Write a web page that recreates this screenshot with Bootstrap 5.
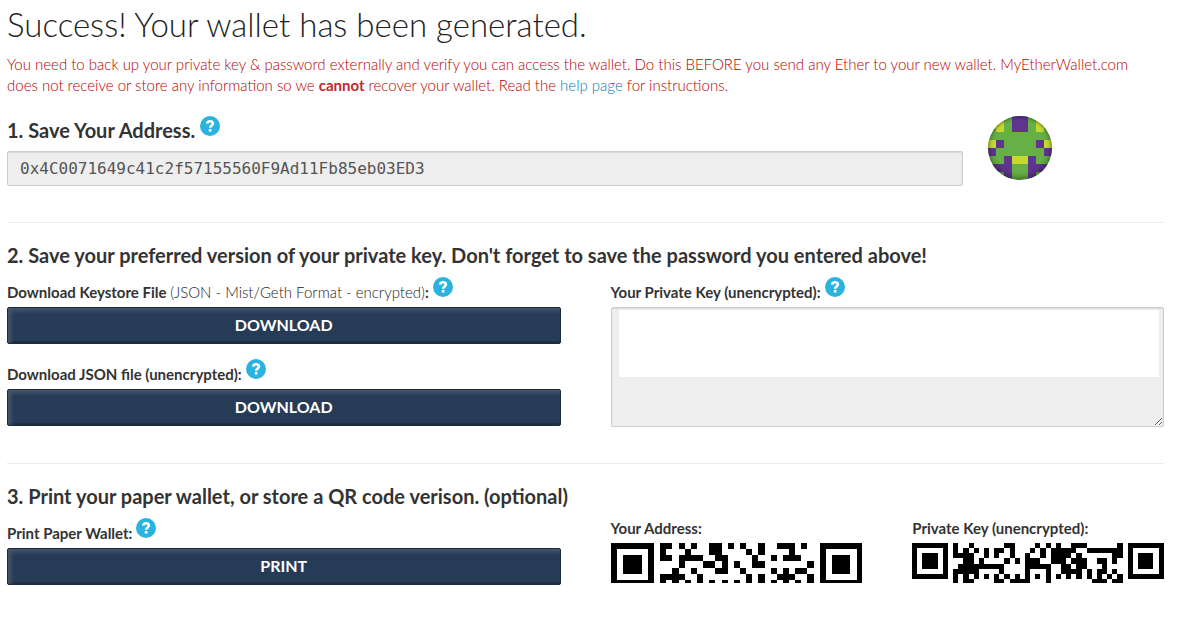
<!DOCTYPE html>
<html lang="en">
<head>
<meta charset="utf-8">
<meta name="viewport" content="width=device-width, initial-scale=1">
<title>MyEtherWallet</title>
<link href="https://cdn.jsdelivr.net/npm/bootstrap@5.3.0/dist/css/bootstrap.min.css" rel="stylesheet">
<style>
  body { font-family: Lato, sans-serif; font-size: 15px; font-weight: 300; line-height: 21px; color: #222; background: #fff; }
  .wallet-page { padding: 4px 17px 24px 7px; }
  .wallet-page .row { --bs-gutter-x: 50px; }
  h1 { font-size: 33px; font-weight: 300; line-height: 40px; margin: 0 0 10px; }
  h2 { font-size: 20px; font-weight: 700; line-height: 24px; margin: 0 0 10px; color: #333; }
  .notice { color: #b80000; margin: 0 0 20px; padding-right: 24px; }
  .notice strong { font-weight: 700; color: #c1272d; }
  .notice a { color: #0080b5; text-decoration: none; }
  .field-head { display: flex; gap: 4px; height: 30px; }
  .field-head h2 { margin: 0; padding-top: 2px; }
  .address-head { gap: 5px; height: 35px; }
  .field-name { font-weight: 700; line-height: 24px; padding-top: 3px; color: #333; }
  .field-name small { font-size: 15px; font-weight: 300; color: #222; }
  .qr-name { font-weight: 700; line-height: 20px; margin-bottom: 5px; color: #333; }
  .help { padding: 0; border: 0; background: none; line-height: 0; margin-bottom: auto; }
  .help svg { display: block; width: 20px; height: 20px; }
  .form-control, .form-control:read-only { background: #eee; border: 1px solid #ccc; border-radius: 2px; box-shadow: inset 0 1px 1px rgba(0,0,0,.08); color: #555; }
  .address { font: 16px/21px "DejaVu Sans Mono", monospace; height: 35px; padding: 6px 12px; }
  .key-area { height: 120px; padding: 2px 4px 49px 7px; resize: vertical; }
  textarea.key-area:read-only { background: linear-gradient(#fff, #fff) content-box no-repeat, #eee; }
  .btn-wallet { --bs-btn-color: #fff; --bs-btn-bg: #263b56; --bs-btn-border-color: #1b2a3e; --bs-btn-hover-color: #fff; --bs-btn-hover-bg: #1b2a3e; --bs-btn-hover-border-color: #1b2a3e;
    --bs-btn-font-weight: 700; --bs-btn-font-size: 16px; --bs-btn-line-height: 21px; --bs-btn-border-radius: 2px;
    padding: 6px 12px 8px; height: 37px; text-transform: uppercase;
    box-shadow: inset 4px 4px 4px -1px #47586f, inset 0 -2px 0 #1d2e46; }
  .btn-wallet + .field-head { margin-top: 15px; }
  hr { margin: 36px 0 20px; border-color: #eaeaea; opacity: 1; }
  .identicon { width: 64px; height: 64px; border-radius: 50%; overflow: hidden; position: relative; }
  .identicon svg { display: block; }
  .identicon::after { content: ""; position: absolute; inset: 0; border-radius: 50%; box-shadow: inset 0 -2px 6px rgba(0,0,0,.4), inset 0 1px 3px rgba(0,0,0,.3); }
  .qr { display: block; width: 100%; }
</style>
</head>
<body>
<svg class="d-none" aria-hidden="true">
  <symbol id="help-icon" viewBox="0 0 20 20">
    <circle cx="10" cy="10" r="10" fill="#2bb3df"/>
    <path d="M7.2 7.700C7.300 6 8.400 5.200 10 5.200C11.700 5.200 12.900 6.100 12.900 7.600C12.900 9.500 10.200 9.500 10.200 11.800" fill="none" stroke="#fff" stroke-width="2.600"/>
    <rect x="8.800" y="13" width="2.700" height="2.600" fill="#fff"/>
  </symbol>
</svg>
<main class="container-fluid wallet-page">
  <h1>Success! Your wallet has been generated.</h1>
  <p class="notice">You need to back up your private key &amp; password externally and verify you can access the wallet. Do this BEFORE you send any Ether to your new wallet. MyEtherWallet.com does not receive or store any information so we <strong>cannot</strong> recover your wallet. Read the <a href="#help">help page</a> for instructions.</p>

  <section class="row">
    <div class="col-10">
      <div class="field-head address-head">
        <h2><label for="address">1. Save Your Address.</label></h2>
        <button class="help" type="button" aria-label="Help"><svg><use href="#help-icon"/></svg></button>
      </div>
      <input class="form-control address" id="address" type="text" readonly value="0x4C0071649c41c2f57155560F9Ad11Fb85eb03ED3">
    </div>
    <div class="col-2 ps-0">
      <div class="identicon">
        <svg width="64" height="64" viewBox="0 0 8 8" shape-rendering="crispEdges" role="img" aria-label="Address icon">
          <path fill="#67b045" d="M0 0h8v8H0z"/>
          <path fill="#5f3590" d="M3 0h2v2H3zM1 3h1v1H1zM6 3h1v1H6zM0 4h1v1H0zM7 4h1v1H7zM2 5h1v3H2zM5 5h1v3H5zM0 6h2v1H0zM6 6h2v1H6z"/>
          <path fill="#c6da2e" d="M1 0h1v2H1zM6 0h1v2H6zM0 3h1v1H0zM7 3h1v1H7zM3 5h2v1H3z"/>
        </svg>
      </div>
    </div>
  </section>

  <hr>

  <section>
    <h2>2. Save your preferred version of your private key. Don't forget to save the password you entered above!</h2>
    <div class="row">
      <div class="col-6">
        <div class="field-head">
          <span class="field-name">Download Keystore File <small>(JSON - Mist/Geth Format - encrypted)</small>:</span>
          <button class="help" type="button" aria-label="Help"><svg><use href="#help-icon"/></svg></button>
        </div>
        <button class="btn btn-wallet w-100" type="button">Download</button>
        <div class="field-head">
          <span class="field-name">Download JSON file (unencrypted):</span>
          <button class="help" type="button" aria-label="Help"><svg><use href="#help-icon"/></svg></button>
        </div>
        <button class="btn btn-wallet w-100" type="button">Download</button>
      </div>
      <div class="col-6">
        <div class="field-head">
          <label class="field-name" for="private-key">Your Private Key (unencrypted):</label>
          <button class="help" type="button" aria-label="Help"><svg><use href="#help-icon"/></svg></button>
        </div>
        <textarea class="form-control key-area" id="private-key" readonly></textarea>
      </div>
    </div>
  </section>

  <hr>

  <section>
    <h2>3. Print your paper wallet, or store a QR code verison. (optional)</h2>
    <div class="row">
      <div class="col-6">
        <div class="field-head">
          <span class="field-name">Print Paper Wallet:</span>
          <button class="help" type="button" aria-label="Help"><svg><use href="#help-icon"/></svg></button>
        </div>
        <button class="btn btn-wallet w-100" type="button">Print</button>
      </div>
      <div class="col-3">
        <div class="qr-name">Your Address:</div>
        <svg class="qr" id="qr-address" role="img" aria-label="Address QR code"></svg>
      </div>
      <div class="col-3">
        <div class="qr-name">Private Key (unencrypted):</div>
        <svg class="qr" id="qr-key" role="img" aria-label="Private key QR code"></svg>
      </div>
    </div>
  </section>
</main>
<script src="https://cdn.jsdelivr.net/npm/bootstrap@5.3.0/dist/js/bootstrap.bundle.min.js"></script>
<script>
  // Each row lists the dark modules between the two finder squares.
  function drawQr(id, size, visibleRows, rows) {
    let d = '';
    for (const x of [0, size - 7]) {
      d += `M${x} 0h7v7h-7zM${x + 1} 1v5h5v-5zM${x + 2} 2h3v3h-3z`;
    }
    rows.forEach((row, y) => row.split(' ').forEach(part => {
      const [from, to = from] = part.split('-').map(Number);
      d += `M${from} ${y}h${to - from + 1}v1h${from - to - 1}z`;
    }));
    const svg = document.getElementById(id);
    svg.setAttribute('viewBox', `0 0 ${size} ${visibleRows}`);
    svg.setAttribute('shape-rendering', 'crispEdges');
    svg.innerHTML = `<path fill="#000" d="${d}"/>`;
  }
  drawQr('qr-address', 41, 6.5, [
    '8-9 11 13 16-17 19 21 24 27-29 31',
    '8 12 16-17 22 24 29',
    '8-9 11-14 17-18 23 26 28-30',
    '11 15-16 18 20 23-24 32',
    '10 13 17-18 21 26 28 30-31',
    '8-11 14 22 24 27-29 32',
    '8 10 12 14 16 18 20 22 24 26 28 30 32'
  ]);
  drawQr('qr-key', 49, 7.8, [
    '8 11 18-19 24 26 28 31-33 40',
    '8 10 12 14 16-17 19 23 25 27-31 34-40',
    '8-11 14 16 19 22 25 27-30 32 39-40',
    '10-11 13 18 20 22-24 27-29 31-33 36-37 39',
    '9-17 22-26 29-30 32-33 37',
    '8-12 17 22 26 29-32 34 36-37 39',
    '8 10 12 14 16 18 20 22 24 26 28 30 32 34 36 38 40',
    '8 10-11 16-17 19-22 26 35-37 39-40'
  ]);
</script>
</body>
</html>
